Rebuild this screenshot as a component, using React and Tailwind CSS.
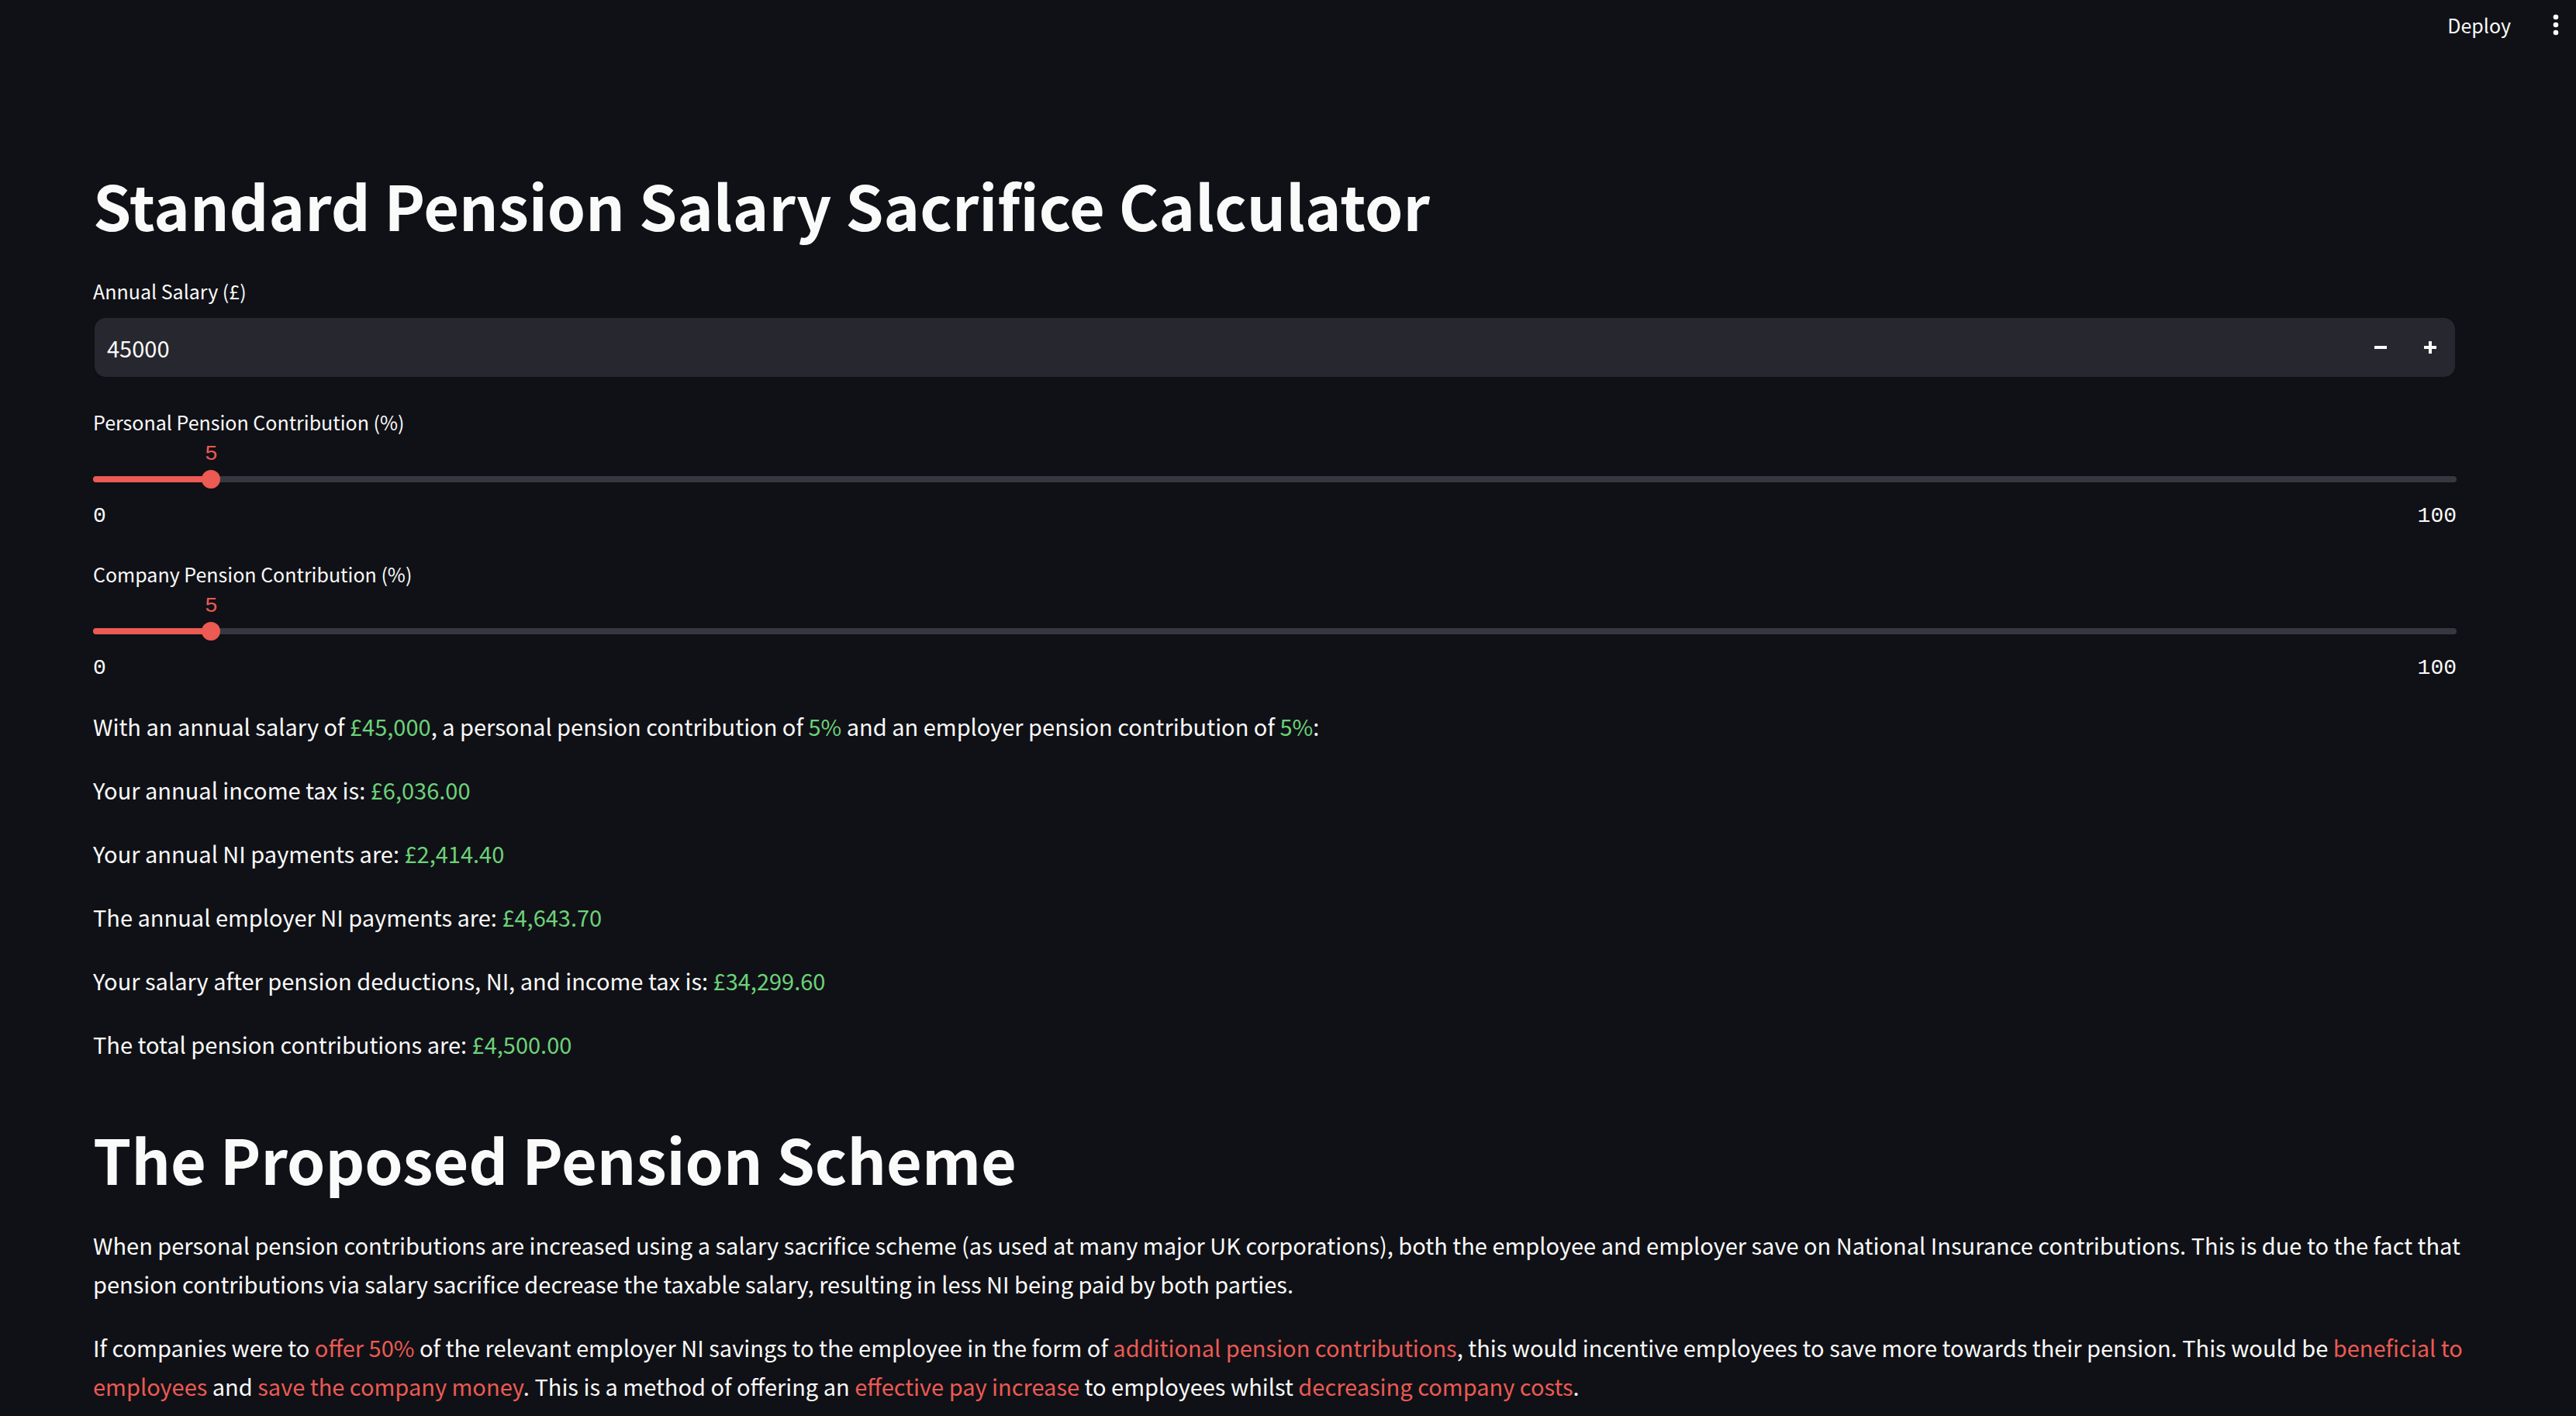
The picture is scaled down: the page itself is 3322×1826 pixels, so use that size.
import { useState } from "react";

const money = (value, digits = 2) =>
  "£" +
  value.toLocaleString("en-GB", {
    minimumFractionDigits: digits,
    maximumFractionDigits: digits,
  });

function Green({ children }) {
  return <span className="text-[#6cd279]">{children}</span>;
}

function Red({ children }) {
  return <span className="text-[#eb5a53]">{children}</span>;
}

function PercentSlider({ id, label, value, onChange }) {
  return (
    <div>
      <label htmlFor={id} className="block text-[25px] leading-9">
        {label}
      </label>
      <div className="relative mt-2 h-8 font-['Liberation_Mono',monospace] text-[28px] leading-8 text-[#eb5a53]">
        <output
          htmlFor={id}
          className="absolute top-0 -translate-x-1/2"
          style={{ left: `${value}%` }}
        >
          {value}
        </output>
      </div>
      <div className="relative mt-1 flex h-6 items-center">
        <div className="h-2 w-full overflow-hidden rounded-full bg-[#363841]">
          <div className="h-full bg-[#eb5a53]" style={{ width: `${value}%` }} />
        </div>
        <input
          id={id}
          type="range"
          min="0"
          max="100"
          value={value}
          onChange={(e) => onChange(Number(e.target.value))}
          className="absolute -left-3 m-0 h-6 w-[calc(100%+24px)] cursor-pointer appearance-none bg-transparent outline-none [&::-webkit-slider-thumb]:size-6 [&::-webkit-slider-thumb]:appearance-none [&::-webkit-slider-thumb]:rounded-full [&::-webkit-slider-thumb]:bg-[#eb5a53]"
        />
      </div>
      <div className="mt-5 flex justify-between font-['Liberation_Mono',monospace] text-[28px] leading-8">
        <span>0</span>
        <span>100</span>
      </div>
    </div>
  );
}

export default function App() {
  const [salary, setSalary] = useState(45000);
  const [personal, setPersonal] = useState(5);
  const [company, setCompany] = useState(5);

  const sacrificed = (salary * personal) / 100;
  const reduced = salary - sacrificed;
  const taxable = Math.max(reduced - 12570, 0);
  const incomeTax = taxable * 0.2;
  const ni = taxable * 0.08;
  const employerNi = Math.max(reduced - 9100, 0) * 0.138;
  const takeHome = reduced - incomeTax - ni;
  const totalPension = sacrificed + (salary * company) / 100;

  return (
    <div className="min-h-screen bg-[#101116] font-['Noto_Sans_CJK_SC',sans-serif] text-[29px] leading-[50px] text-[#fafafa]">
      <header className="flex h-16 items-center justify-end gap-9 pr-4">
        <button type="button" className="text-[25px] leading-9">
          Deploy
        </button>
        <button type="button" aria-label="Main menu">
          <svg viewBox="0 0 32 32" className="size-8" fill="currentColor" aria-hidden="true">
            <circle cx="22" cy="6" r="3.3" />
            <circle cx="22" cy="16" r="3.3" />
            <circle cx="22" cy="26" r="3.3" />
          </svg>
        </button>
      </header>

      <main className="pt-[147px] pr-[154px] pl-[120px]">
        <h1 className="text-[79px] leading-[106px] font-bold">
          Standard Pension Salary Sacrifice Calculator
        </h1>

        <label htmlFor="salary" className="mt-10 block text-[25px] leading-9">
          Annual Salary (£)
        </label>
        <div className="mt-[15px] flex h-20 rounded-[16px] border-2 border-[#101116] bg-[#26272f] bg-clip-padding">
          <input
            id="salary"
            type="text"
            inputMode="numeric"
            value={salary}
            onChange={(e) => setSalary(Number(e.target.value.replace(/\D/g, "")))}
            className="min-w-0 flex-1 bg-transparent px-4 outline-none"
          />
          <button
            type="button"
            aria-label="Decrease salary"
            onClick={() => setSalary(Math.max(salary - 1, 0))}
            className="flex w-16 items-center justify-center"
          >
            <svg viewBox="0 0 16 16" className="size-4" fill="currentColor" aria-hidden="true">
              <path d="M0 6h16v4H0z" />
            </svg>
          </button>
          <button
            type="button"
            aria-label="Increase salary"
            onClick={() => setSalary(salary + 1)}
            className="flex w-16 items-center justify-center"
          >
            <svg viewBox="0 0 16 16" className="size-4" fill="currentColor" aria-hidden="true">
              <path d="M6 0h4v6h6v4h-6v6H6v-6H0V6h6z" />
            </svg>
          </button>
        </div>

        <div className="mt-[38px] space-y-10">
          <PercentSlider
            id="personal"
            label="Personal Pension Contribution (%)"
            value={personal}
            onChange={setPersonal}
          />
          <PercentSlider
            id="company"
            label="Company Pension Contribution (%)"
            value={company}
            onChange={setCompany}
          />
        </div>

        <section className="mt-[33px] space-y-8">
          <p>
            With an annual salary of <Green>{money(salary, 0)}</Green>, a personal pension
            contribution of <Green>{personal}%</Green> and an employer pension contribution of{" "}
            <Green>{company}%</Green>:
          </p>
          <p>
            Your annual income tax is: <Green>{money(incomeTax)}</Green>
          </p>
          <p>
            Your annual NI payments are: <Green>{money(ni)}</Green>
          </p>
          <p>
            The annual employer NI payments are: <Green>{money(employerNi)}</Green>
          </p>
          <p>
            Your salary after pension deductions, NI, and income tax is:{" "}
            <Green>{money(takeHome)}</Green>
          </p>
          <p>
            The total pension contributions are: <Green>{money(totalPension)}</Green>
          </p>
        </section>

        <h1 className="mt-[70px] text-[79px] leading-[106px] font-bold">
          The Proposed Pension Scheme
        </h1>

        <section className="-mr-6 mt-[33px] space-y-8">
          <p>
            When personal pension contributions are increased using a salary sacrifice scheme (as
            used at many major UK corporations), both the employee and employer save on National
            Insurance contributions. This is due to the fact that pension contributions via salary
            sacrifice decrease the taxable salary, resulting in less NI being paid by both parties.
          </p>
          <p>
            If companies were to <Red>offer 50%</Red> of the relevant employer NI savings to the
            employee in the form of <Red>additional pension contributions</Red>, this would
            incentive employees to save more towards their pension. This would be{" "}
            <Red>beneficial to employees</Red> and <Red>save the company money</Red>. This is a
            method of offering an <Red>effective pay increase</Red> to employees whilst{" "}
            <Red>decreasing company costs</Red>.
          </p>
        </section>
      </main>
    </div>
  );
}
